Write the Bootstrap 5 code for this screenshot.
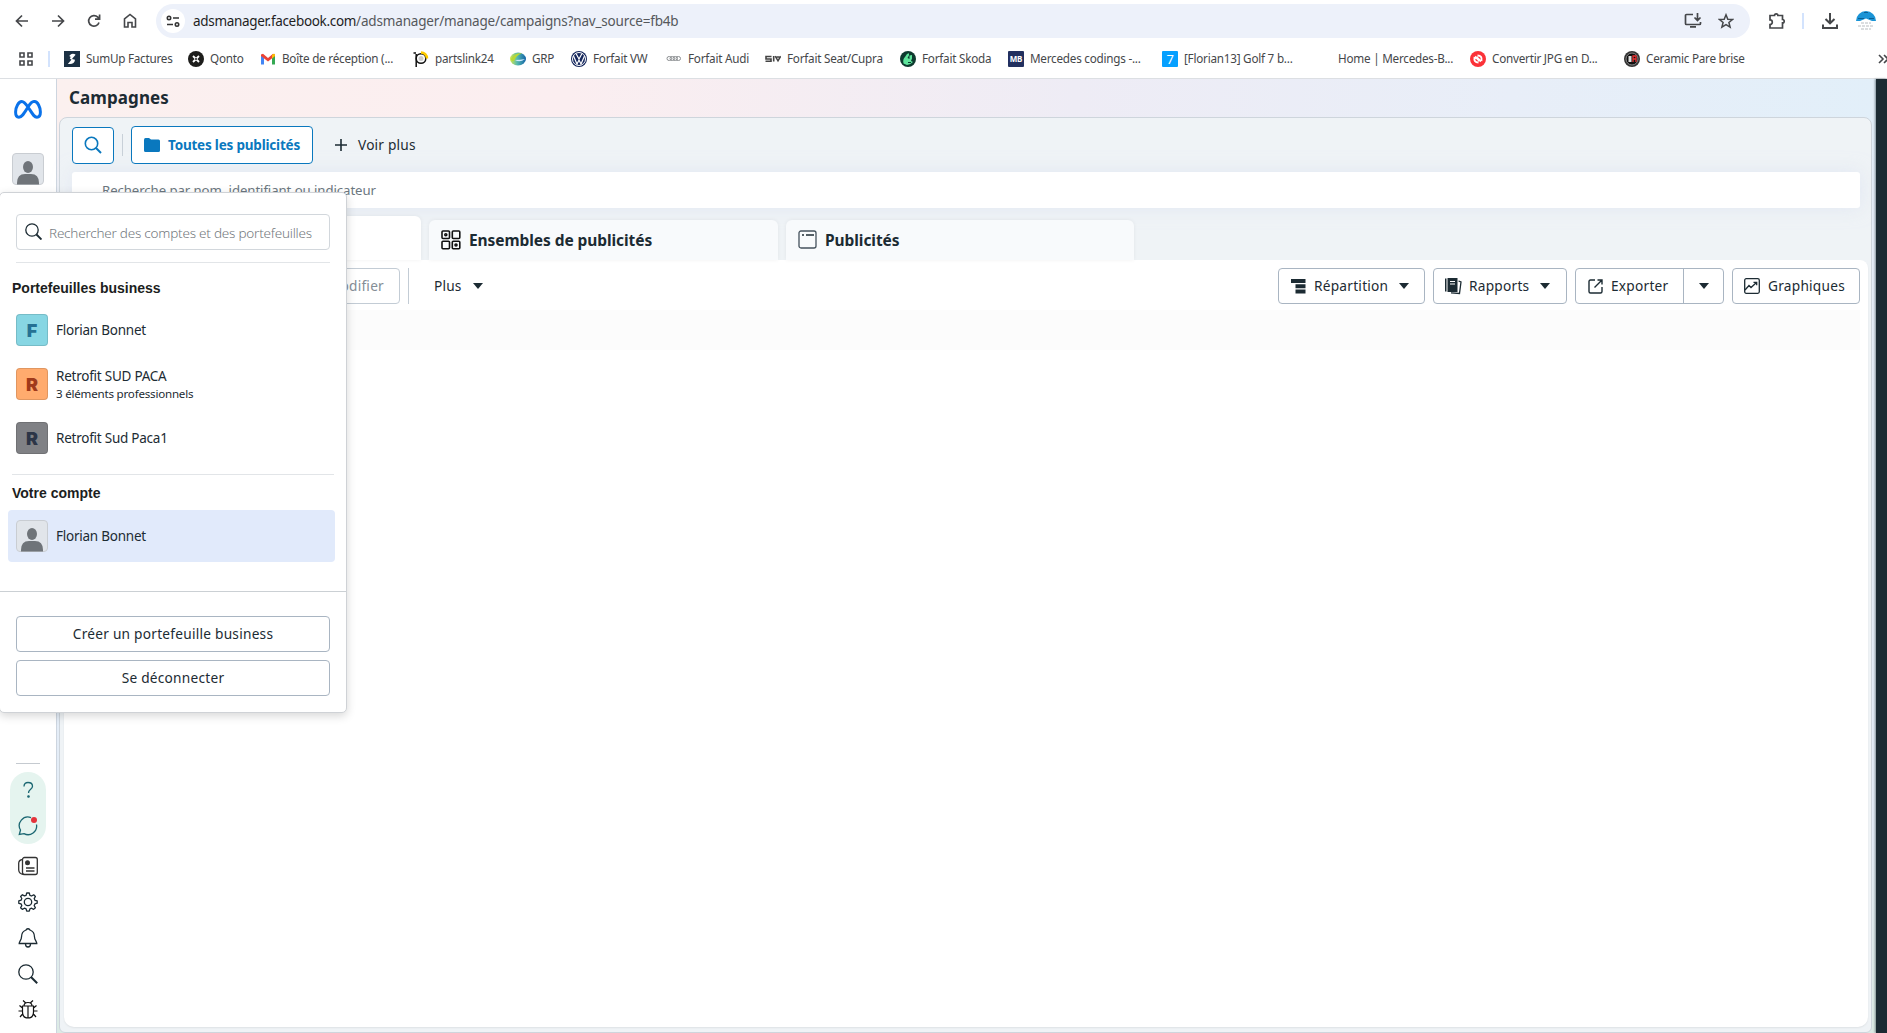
<!DOCTYPE html>
<html lang="fr">
<head>
<meta charset="utf-8">
<title>Campagnes</title>
<link href="https://cdn.jsdelivr.net/npm/bootstrap@5.3.0/dist/css/bootstrap.min.css" rel="stylesheet">
<style>
body{width:1887px;height:1033px;overflow:hidden;font-family:"Noto Sans","Open Sans",sans-serif;color:#1c2b33;background:#fff;line-height:1.2}
svg{display:block;flex:none}
span,b{white-space:nowrap}
.chrome-bar{height:41px}
.nav-icons{width:156px;padding-left:14px;gap:20px}
.omni{width:1594px;height:34px;border-radius:17px;background:#edf1fa;font-size:13.5px;color:#1f1f1f;padding:0 16px 0 5px}
.omni span{letter-spacing:-.32px;padding-top:2px}
.omni .url-path{color:#55585c;letter-spacing:-.17px}
.site-chip{width:24px;height:24px;background:#fff;border-radius:50%;margin-right:8px}
.marks-bar{height:38px;border-bottom:1px solid #dcdfe3;font-size:11.7px;letter-spacing:-.23px;color:#45474a;padding-left:18px}
.marks-bar span{margin-top:-2px}
.vsep{width:2px;background:#d3e3fd;flex:none}
.bm{gap:6px;flex:none}
.bm svg{margin-top:-2px}
.w124{width:124px}.w72{width:72px}.w153{width:153px}.w97{width:97px}.w61{width:61px}.w95{width:95px}.w99{width:99px}.w135{width:135px}.w108{width:108px}.w154{width:154px}.w255{width:254px}
.rail{width:57px;border-right:1px solid #cdd5df}
.stage{background:linear-gradient(180deg,transparent 45px,#e6eef8 130px,#e4edf7 80%,#dcebe5),linear-gradient(90deg,#fbf0ef 0,#fbeef0 28%,#eeecf5 56%,#e8eef8 80%,#e2eff9 100%);padding:38px 4px 0 2px;width:1819px}
.page-name{font-weight:700;font-size:17px;letter-spacing:.1px;height:38px;margin:-38px 0 0 10px;line-height:38px}
.sheet{border:1px solid #ced5dc;border-radius:8px 8px 6px 6px;background:#eff3f6;height:916px;padding:8px 3px 5px 4px}
.shell-btn{border:1px solid #0a78be;border-radius:4px;color:#0a78be;background:#fff}
.find-btn{width:42px;height:37px}
.all-btn{width:182px;height:38px;font-weight:700;font-size:13.5px;letter-spacing:-.2px;padding-left:12px;gap:8px}
.find-line{height:36px;border-radius:3px;background:#fff;margin:8px 8px 0 8px;padding:0 30px;line-height:37px;font-size:13.2px;letter-spacing:-.07px;color:#6b7780;box-shadow:0 0 18px rgba(215,222,240,.55)}
.tabs-row{height:44px;margin-top:8px;gap:8px}
.tabx{width:349px;height:40px;background:#f8fafc;border-radius:6px 6px 0 0;font-weight:700;font-size:15.5px;letter-spacing:-.07px;padding:0 0 1px 12px;gap:8px;box-shadow:0 0 4px rgba(0,0,0,.06)}
.tabx span{padding-top:2px}
.tabx.on{width:357px;height:44px;background:#fff}
.tabx.last{width:348px}
.panel{background:#fff;border-radius:0 8px 10px 10px;height:767px;padding:8px 8px 0;box-shadow:0 1px 2px rgba(0,0,0,.07)}
.tool{height:36px;border:1px solid #a9b5c2;border-radius:4px;background:#fff;font-size:13.7px;letter-spacing:.24px;color:#1c2b33;flex:none}
.quiet{color:#858e96;border-color:#c3ccd5}
.small-ui{font-size:13.7px;letter-spacing:.2px}
.band{height:40px;background:#fcfcfc;margin-top:6px}
.caret{width:0;height:0;border:5.5px solid transparent;border-top:6px solid #1c2b33;border-bottom:0}
.edge{width:11px;background:#1c2b33;box-shadow:-1px 0 2px rgba(28,43,51,.5);z-index:2}
.switcher{position:absolute;left:-1px;top:192px;width:348px;height:521px;background:#fff;border:1px solid #cfd2d6;border-radius:5px;box-shadow:0 3px 10px rgba(0,0,0,.16);z-index:10;padding-top:21px}
.seek{height:36px;margin:0 16px;border:1px solid #d2d7dc;border-radius:4px;font-size:13.5px;font-weight:300;letter-spacing:-.22px;color:#74797e;padding:0 15px 0 8px;gap:7px}
.seek span{padding-top:3px}
.hr1{height:1px;background:#e2e5e8}
.sect{font:700 14px/18px "Liberation Sans",sans-serif;color:#1c1e21;margin-left:12px}
.person{height:54px;padding-left:16px;gap:8px;font-size:13.5px;letter-spacing:-.24px}
.person span{padding-top:1px}
.subline{font-size:11.6px;letter-spacing:-.22px;margin-top:2px}
.tile{width:32px;height:32px;border-radius:4px;font:900 18px/31px Inter,sans-serif;text-align:center;border:1px solid rgba(0,0,0,.12);flex:none}
.foot{border-top:1px solid #cbd0d4;padding:24px 16px 0;margin-top:29px}
.foot .tool{margin-bottom:8px;width:100%}
.picked{height:52px;background:#e1eafb;border-radius:4px;margin:4px 11px 0 8px;padding-left:8px}
.pill-help{width:36px;height:72px;border-radius:18px;background:#e5f4ef}
</style>
</head>
<body>
<div class="chrome-bar d-flex align-items-center">
  <div class="nav-icons d-flex align-items-center">
    <svg width="16" height="16" fill="none" stroke="#45474a" stroke-width="1.7"><path d="M14 8H3M8 2.5 2.5 8 8 13.5"/></svg>
    <svg width="16" height="16" fill="none" stroke="#45474a" stroke-width="1.7"><path d="M2 8h11M8 2.500 13.500 8 8 13.500"/></svg>
    <svg width="16" height="16" fill="none" stroke="#45474a" stroke-width="1.7"><path d="M13 9.500A5.300 5.300 0 1 1 11.800 4.200L13.500 6M13.600 1.500V6.200H9"/></svg>
    <svg width="16" height="16" fill="none" stroke="#45474a" stroke-width="1.600"><path d="M2.500 14V6L8 1.500 13.500 6v8H10V9.500H6V14z"/></svg>
  </div>
  <div class="omni d-flex align-items-center">
    <div class="site-chip d-flex align-items-center justify-content-center"><svg width="14" height="14" fill="none" stroke="#333" stroke-width="1.600"><circle cx="3" cy="4" r="1.700"/><path d="M7 4h6M1 10.500h6"/><circle cx="11" cy="10.500" r="1.700"/></svg></div>
    <span>adsmanager.facebook.com</span><span class="url-path">/adsmanager/manage/campaigns?nav_source=fb4b</span>
    <svg class="ms-auto" width="18" height="16" fill="none" stroke="#45474a" stroke-width="1.700"><path d="M9 1.500H2.500a1 1 0 0 0-1 1v8a1 1 0 0 0 1 1h13a1 1 0 0 0 1-1V9M13.500 0v7M10.500 4.500l3 3 3-3M6 13.800h6"/></svg>
    <svg class="ms-3" width="16" height="16" fill="none" stroke="#45474a" stroke-width="1.500"><path d="m8 1.800 1.800 4.400 4.700.3-3.600 3 1.200 4.600L8 11.600l-4.100 2.500 1.200-4.600-3.600-3 4.700-.3z"/></svg>
  </div>
  <svg style="margin-left:18px" width="18" height="18" fill="none" stroke="#45474a" stroke-width="1.700"><path d="M2 3.500h4.500a1.700 1.700 0 0 1 3.400 0h4.600v4a1.700 1.700 0 0 1 0 3.400V16H2v-3.500a2.300 2.300 0 0 0 0-4.600z"/></svg>
  <div class="vsep ms-3" style="height:16px"></div>
  <svg style="margin-left:17px" width="18" height="18" fill="none" stroke="#45474a" stroke-width="2"><path d="M9 1v10M4.500 7 9 11.300 13.500 7M2 12.500V16h14v-3.500"/></svg>
  <svg class="ms-3" width="22" height="22"><path d="M1 11a10 10 0 0 1 20 0z" fill="#1a94d6"/><path d="m5 11 6-2.500 6 2.500z" fill="#fff"/><path d="M6 13h10M3 16h16M6 19h10" stroke="#b8bcc0" stroke-dasharray="3 1"/><path d="M3 8.500h6M14 8.500h5M9 2.500h4" stroke="#0c5f94"/></svg>
</div>
<div class="marks-bar d-flex align-items-center">
  <svg width="16" height="16" fill="none" stroke="#45474a" stroke-width="1.600" style="margin-top:-2px"><path d="M2 2h4v4H2zM10 2h4v4h-4zM2 10h4v4H2zM10 10h4v4h-4z"/></svg>
  <div class="vsep" style="height:16px;margin:-2px 14px 0"></div>
  <div class="bm w124 d-flex align-items-center"><svg width="16" height="16"><path fill="#1c3144" d="M0 0h16v16H0z"/><path d="M6 5.500q2-2.500 4-1.500L6.500 8M10 8.500Q9.500 12 6 12l3-3.500" stroke="#fff" stroke-width="2" fill="none"/></svg><span>SumUp Factures</span></div>
  <div class="bm w72 d-flex align-items-center"><svg width="16" height="16"><circle cx="8" cy="8" r="8" fill="#1d1d1b"/><path d="m5 5 6 6M11 5l-6 6" stroke="#fff" stroke-width="1.800"/><circle cx="8" cy="8" r="1" fill="#1d1d1b"/></svg><span>Qonto</span></div>
  <div class="bm w153 d-flex align-items-center"><svg width="16" height="16"><path d="M1 4v9.500h3V7z" fill="#4285f4"/><path d="M15 4v9.500h-3V7z" fill="#34a853"/><path d="M1 3.500 3 2.800 8 7l5-4.200 2 .700V5L8 10.500 1 5z" fill="#ea4335"/><path d="M12 3.800q3-2 3 0V5l-3 2.500z" fill="#fbbc04"/></svg><span>Boîte de réception (...</span></div>
  <div class="bm w97 d-flex align-items-center"><svg width="16" height="16" fill="none"><circle cx="8" cy="7.500" r="4.800" stroke="#111" stroke-width="1.500"/><circle cx="8" cy="7.500" r="2.500" fill="#ccc"/><path d="M3.200 3v13M.500 2H3" stroke="#111" stroke-width="1.500"/><path d="M8 1.500a6 6 0 0 1 6 6" stroke="#fc0" stroke-width="2.500"/></svg><span>partslink24</span></div>
  <div class="bm w61 d-flex align-items-center"><svg width="16" height="16"><defs><linearGradient id="g"><stop stop-color="#d7e84a"/><stop offset=".45" stop-color="#55b9b0"/><stop offset="1" stop-color="#1262a8"/></linearGradient></defs><ellipse cx="8" cy="8" rx="8" ry="6.500" fill="url(#g)"/><path d="M1 8Q5 1.500 12 2.500 6 4 4 10 1 10 1 8z" fill="#b7d836"/><path d="M5 9q5 3 10-1-5 1-10 1" fill="#cfeaff"/></svg><span>GRP</span></div>
  <div class="bm w95 d-flex align-items-center"><svg width="16" height="16" fill="none"><circle cx="8" cy="8" r="8" fill="#14265c"/><circle cx="8" cy="8" r="6.500" stroke="#fff"/><path d="m5 2.500 3 5.500 3-5.500M2.500 5 6 13l2-4 2 4 3.500-8" stroke="#fff" stroke-width="1.200"/></svg><span>Forfait VW</span></div>
  <div class="bm w99 d-flex align-items-center"><svg width="16" height="16" fill="none" stroke="#8c8f92"><rect x="1" y="5.500" width="4.500" height="4" rx="2"/><rect x="4" y="5.500" width="4.500" height="4" rx="2"/><rect x="7" y="5.500" width="4.500" height="4" rx="2"/><rect x="10" y="5.500" width="4.500" height="4" rx="2"/></svg><span>Forfait Audi</span></div>
  <div class="bm w135 d-flex align-items-center"><svg width="16" height="16" fill="none" stroke="#444" stroke-width="1.500"><path d="M6.500 5.500H1V8h5v2.300H.500M8.700 5v5.500" stroke-width="1.600"/><path d="m10.200 5.200 2.800 4.600 2.700-4.600M11.500 6h3"/></svg><span>Forfait Seat/Cupra</span></div>
  <div class="bm w108 d-flex align-items-center"><svg width="16" height="16"><circle cx="8" cy="8" r="8" fill="#0e3a2f"/><path d="M3.500 12.500Q2.500 8 5 6l2-3 2-.8v2L7.500 7l2 1V4.500L12 4v3.500l-1 2.500 2 1q-3 3-6 3z" fill="#5fe59c"/><path d="M8 11.500h3" stroke="#0e3a2f"/></svg><span>Forfait Skoda</span></div>
  <div class="bm w154 d-flex align-items-center"><svg width="16" height="16"><rect width="16" height="16" rx="1" fill="#22305f"/><text x="8" y="11" font-size="8" font-weight="700" fill="#fff" text-anchor="middle">MB</text></svg><span>Mercedes codings -...</span></div>
  <div class="bm w154 d-flex align-items-center"><svg width="16" height="16"><rect width="16" height="16" rx="1" fill="#06a0ff"/><text x="8" y="13" font-size="13" fill="#fff" text-anchor="middle">7</text></svg><span>[Florian13] Golf 7 b...</span></div>
  <div class="bm w154 d-flex align-items-center"><svg width="16" height="16"></svg><span>Home | Mercedes-B...</span></div>
  <div class="bm w154 d-flex align-items-center"><svg width="16" height="16" fill="none"><circle cx="8" cy="8" r="8" fill="#fb3238"/><path d="M11 10.500 6.500 6M5 5.500 9.500 10M7.500 4.500q5 0 4 5.500M8.500 11.500q-5 0-4-5.500" stroke="#fff" stroke-width="1.800"/></svg><span>Convertir JPG en D...</span></div>
  <div class="bm w255 d-flex align-items-center"><svg width="16" height="16"><circle cx="8" cy="8" r="8" fill="#333"/><circle cx="8" cy="8" r="6" fill="#111" stroke="#888"/><path d="M4.500 5h3v6h-3z" fill="#ddd"/><path d="M9 11V5h3v6M9 8h3" stroke="#e33" stroke-width="1.300" fill="none"/></svg><span>Ceramic Pare brise</span></div>
  <svg width="10" height="16" fill="none" stroke="#45474a" stroke-width="1.600" style="margin-top:-2px"><path d="m1 4 4 4-4 4M6 4l4 4-4 4"/></svg>
</div>
<div class="d-flex" style="height:954px">
  <div class="rail d-flex flex-column align-items-center">
    <svg style="margin-top:21px" width="28" height="19" fill="none" stroke="#0a72ea" stroke-width="3" stroke-linejoin="round"><path d="M14 7C11.500 3.500 10 1.600 7.800 1.600 4.500 1.600 1.600 7 1.600 12c0 3 1.200 5.300 3.300 5.300C8 17.300 10 13.500 14 7s5-5.400 6.600-5.400c3 0 5.800 5.400 5.800 10.400 0 3-1.200 5.300-3.500 5.300-2.900 0-4.900-4.300-8.900-10.300z"/></svg>
    <svg style="margin-top:34px" width="32" height="32"><rect x=".5" y=".5" width="31" height="31" rx="3.500" fill="#e1e5ea" stroke="#c9cdd2"/><ellipse cx="16" cy="14" rx="5" ry="6" fill="#6f7479"/><path d="M5 31.500V30q0-9 8-9h6q8 0 8 9v1.500z" fill="#6f7479"/></svg>
    <div class="mt-auto" style="width:24px;height:1px;background:#c5cad0"></div>
    <div class="pill-help d-flex flex-column align-items-center" style="margin-top:8px;padding-top:9px">
      <svg width="20" height="18" fill="none" stroke="#1b6772" stroke-width="1.300"><path d="M6 5.500C6 3 7.500 1.500 10 1.500S14.500 3 14.500 5.200C14.500 8.500 10.500 8 10.500 12"/><circle cx="10.500" cy="15.500" r=".7" fill="#1b6772"/></svg>
      <svg style="margin-top:17px" width="20" height="20" fill="none" stroke="#1b6772" stroke-width="1.300"><path d="M18.500 8.500A8.600 8.600 0 0 1 6 17.600L1.300 18.500 2.500 14A8.600 8.600 0 0 1 13 1.600"/><circle cx="16" cy="4" r="3" fill="#e4333b" stroke="none"/></svg>
    </div>
    <svg style="margin-top:12px" width="20" height="20" fill="none" stroke="#333" stroke-width="1.300"><rect x="4.500" y="1.500" width="14.800" height="17" rx="2"/><path d="M4.500 3.500Q1 4 .700 7v7q.3 4 5 4.500M8 12h8.500M8 15h8.500"/><circle cx="9.500" cy="6.800" r="2.500" fill="#333" stroke="none"/></svg>
    <svg style="margin-top:16px" width="20" height="20" fill="none" stroke="#1c2b33" stroke-width="1.300" stroke-linejoin="round"><path d="M8.700 1h2.600l.6 2.300 1.700.7 2.100-1.200 1.700 1.700-1.200 2.100.7 1.700 2.300.600v2.300l-2.300.7-.7 1.700 1.200 2.100-1.800 1.700-2-1.200-1.700.7-.6 2.300H8.700l-.6-2.300-1.700-.7-2.100 1.200-1.700-1.700 1.200-2.100-.7-1.700L.800 11.300V8.800l2.300-.6.700-1.700-1.200-2L4.400 2.700l2 1.200 1.700-.6z"/><circle cx="10" cy="10" r="3.700"/></svg>
    <svg style="margin-top:16px" width="20" height="20" fill="none" stroke="#1c2b33" stroke-width="1.300"><path d="M8 2q2-2.500 4 0c4 1.500 4.500 4 4.500 7 0 3 2.300 4.500 2.300 6.500H1.200C1.200 13.500 3.500 12 3.500 9c0-3 .5-5.500 4.500-7zM7.500 16q0 3 2.500 3t2.500-3"/></svg>
    <svg style="margin-top:16px" width="20" height="20" fill="none" stroke="#1c2b33" stroke-width="1.300"><circle cx="8" cy="8" r="7.200"/><path d="m13 13 6.200 6.200" stroke-width="2"/></svg>
    <svg style="margin:16px 0 14px" width="20" height="19" fill="none" stroke="#111" stroke-width="1.200"><path d="M4.500 6h11v6q0 6-5.500 6t-5.500-6zM10 6v12M6 6q0-3.500 4-3.500T14 6M7.500 2.700 5 .500M12.500 2.700 15 .500M4.500 8 1.500 5.500M15.500 8l3-2.500M4.500 11H.500M15.500 11h4M5 13.500l-3 3.500M15 13.500l3 3.500"/></svg>
  </div>
  <div class="stage flex-shrink-0">
    <div class="page-name"><span>Campagnes</span></div>
    <div class="sheet">
      <div class="d-flex align-items-center ps-2" style="height:38px">
        <div class="shell-btn find-btn d-flex align-items-center justify-content-center"><svg width="18" height="18" fill="none" stroke="#0a78be" stroke-width="1.600"><circle cx="7.500" cy="7.500" r="6.200"/><path d="m12 12 5 5" stroke-width="2"/></svg></div>
        <div style="width:1px;height:22px;background:#c8d0d8;margin:0 8px"></div>
        <div class="shell-btn all-btn d-flex align-items-center"><svg width="16" height="14"><path d="M0 2Q0 0 1.500 0H5l2 1.500h7.500Q16 1.500 16 3v9.500q0 1.500-1.500 1.500h-13Q0 14 0 12.500z" fill="#0a78be"/></svg><span>Toutes les publicités</span></div>
        <svg style="margin:0 11px 0 22px" width="12" height="12" stroke="#1c2b33" stroke-width="1.600"><path d="M6 0v12M0 6h12"/></svg><span class="small-ui">Voir plus</span>
      </div>
      <div class="find-line"><span>Recherche par nom, identifiant ou indicateur</span></div>
      <div class="tabs-row d-flex align-items-end">
        <div class="tabx on"></div>
        <div class="tabx d-flex align-items-center"><svg width="20" height="20" fill="none" stroke="#111" stroke-width="1.600"><rect x="1" y="1" width="7.500" height="7.500" rx="1"/><rect x="11.300" y="1" width="7.500" height="7.500" rx="1"/><rect x="1" y="11.300" width="7.500" height="7.500" rx="1"/><rect x="11.300" y="11.300" width="7.500" height="7.500" rx="1"/><circle cx="4.800" cy="4.800" r="1"/><circle cx="15" cy="15" r="1"/></svg><span>Ensembles de publicités</span></div>
        <div class="tabx last d-flex align-items-center"><svg width="19" height="19" fill="none" stroke="#44525c" stroke-width="1.300"><rect x="1" y="1" width="17" height="17" rx="2"/><path d="M8 5h8M4 5h2" stroke="#1c2b33" stroke-width="1.500"/></svg><span>Publicités</span></div>
      </div>
      <div class="panel">
        <div class="d-flex align-items-center">
          <div class="tool quiet d-flex align-items-center justify-content-end" style="width:328px;padding-right:15px"><span>Modifier</span></div>
          <div style="width:1px;height:36px;background:#c3ccd5;margin:0 25px 0 8px"></div>
          <span class="small-ui">Plus</span><i class="caret" style="margin-left:11px"></i>
          <div class="tool ms-auto d-flex align-items-center" style="width:147px;padding-left:12px"><svg width="15" height="15" fill="#1c2b33"><path d="M0 0h14.500v4H0zM4.500 5.200h10v4h-10zM4.500 10.500h10v4h-10z"/></svg><span style="margin:0 11px 0 8px">Répartition</span><i class="caret"></i></div>
          <div class="tool ms-2 d-flex align-items-center" style="width:134px;padding-left:11px"><svg width="17" height="17"><path d="M0 .500h1.500v13H0zM2.500 0h10v14h-10z" fill="#1c2b33"/><path d="M5 3.500h5M5 6h5" stroke="#fff"/><path d="M13.500 3 16 4l-1.500 11.500L6 14.800" fill="none" stroke="#1c2b33" stroke-width="1.300"/></svg><span style="margin:0 11px 0 7px">Rapports</span><i class="caret"></i></div>
          <div class="tool ms-2 d-flex align-items-center" style="width:149px;padding-left:12px"><svg width="15" height="15" fill="none" stroke="#1c2b33" stroke-width="1.400"><path d="M7 1H2.500Q1 1 1 2.500v10Q1 14 2.500 14h10q1.500 0 1.500-1.500V8M9.500 1H14v4.500M14 1 6.500 8.500"/></svg><span style="margin:0 15px 0 8px">Exporter</span><div style="width:1px;height:34px;background:#a9b5c2"></div><i class="caret m-auto"></i></div>
          <div class="tool ms-2 d-flex align-items-center" style="width:128px;padding-left:11px;gap:8px"><svg width="16" height="16" fill="none" stroke="#1c2b33" stroke-width="1.300"><rect x=".7" y=".7" width="14.600" height="14.600" rx="1.500"/><path d="m1 12 4-4.500 2 2 5.500-5M9.500 4.300h3.200v3"/></svg><span>Graphiques</span></div>
        </div>
        <div class="band"></div>
      </div>
    </div>
  </div>
  <div class="edge flex-shrink-0"></div>
</div>
<div class="switcher">
  <div class="seek d-flex align-items-center"><svg width="17" height="17" fill="none" stroke="#1c2b33" stroke-width="1.300" style="margin-top:-2px"><circle cx="7" cy="7" r="6.200"/><path d="m11.500 11.500 5 5" stroke-width="1.900"/></svg><span class="overflow-hidden">Rechercher des comptes et des portefeuilles b</span></div>
  <div class="hr1" style="margin:12px 16px 16px"></div>
  <div class="sect"><span>Portefeuilles business</span></div>
  <div class="person d-flex align-items-center" style="margin-top:6px"><div class="tile" style="background:#87d6e3;color:#257193">F</div><span>Florian Bonnet</span></div>
  <div class="person d-flex align-items-center"><div class="tile" style="background:#ffab6e;color:#a03a1b">R</div><div class="d-flex flex-column align-items-start"><span>Retrofit SUD PACA</span><span class="subline">3 éléments professionnels</span></div></div>
  <div class="person d-flex align-items-center"><div class="tile" style="background:#808185;color:#2c3547">R</div><span>Retrofit Sud Paca1</span></div>
  <div class="hr1" style="margin:9px 12px"></div>
  <div class="sect"><span>Votre compte</span></div>
  <div class="person picked d-flex align-items-center" style="margin-top:8px"><svg width="32" height="32"><rect x=".5" y=".5" width="31" height="31" rx="3.500" fill="#e1e5ea" stroke="#c9cdd2"/><ellipse cx="16" cy="14" rx="5" ry="6" fill="#6f7479"/><path d="M5 31.500V30q0-9 8-9h6q8 0 8 9v1.500z" fill="#6f7479"/></svg><span>Florian Bonnet</span></div>
  <div class="foot">
    <div class="tool d-flex align-items-center justify-content-center"><span>Créer un portefeuille business</span></div>
    <div class="tool d-flex align-items-center justify-content-center"><span>Se déconnecter</span></div>
  </div>
</div>
<script src="https://cdn.jsdelivr.net/npm/bootstrap@5.3.0/dist/js/bootstrap.bundle.min.js"></script>
</body>
</html>
